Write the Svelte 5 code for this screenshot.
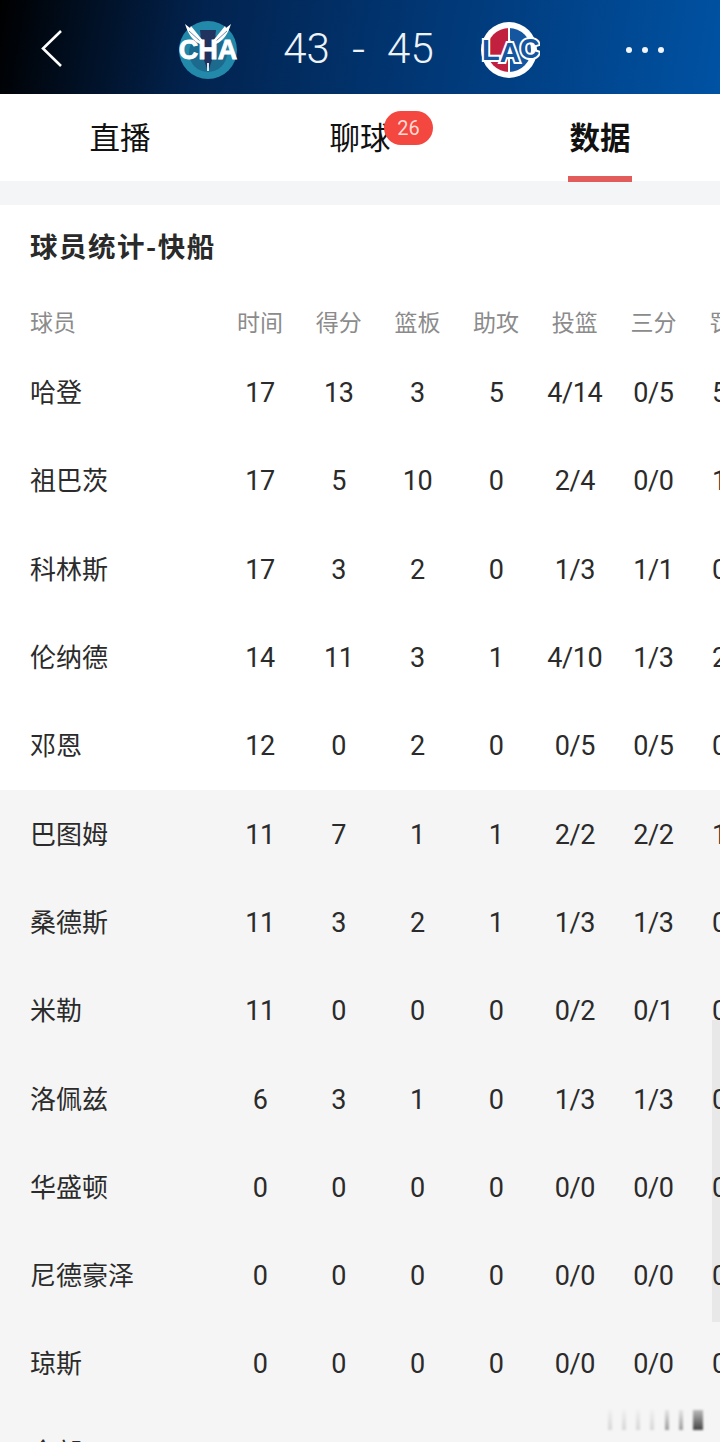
<script>
  const columns = ["时间", "得分", "篮板", "助攻", "投篮", "三分", "罚球"];
  const players = [
    ["哈登", "17", "13", "3", "5", "4/14", "0/5", "5/5"],
    ["祖巴茨", "17", "5", "10", "0", "2/4", "0/0", "1/2"],
    ["科林斯", "17", "3", "2", "0", "1/3", "1/1", "0/0"],
    ["伦纳德", "14", "11", "3", "1", "4/10", "1/3", "2/2"],
    ["邓恩", "12", "0", "2", "0", "0/5", "0/5", "0/0"],
    ["巴图姆", "11", "7", "1", "1", "2/2", "2/2", "1/1"],
    ["桑德斯", "11", "3", "2", "1", "1/3", "1/3", "0/0"],
    ["米勒", "11", "0", "0", "0", "0/2", "0/1", "0/0"],
    ["洛佩兹", "6", "3", "1", "0", "1/3", "1/3", "0/0"],
    ["华盛顿", "0", "0", "0", "0", "0/0", "0/0", "0/0"],
    ["尼德豪泽", "0", "0", "0", "0", "0/0", "0/0", "0/0"],
    ["琼斯", "0", "0", "0", "0", "0/0", "0/0", "0/0"],
    ["全部", "0", "0", "0", "0", "0/0", "0/0", "0/0"]
  ];
</script>

<div class="page">
  <header class="top">
    <svg class="back" width="24" height="40" viewBox="0 0 24 40">
      <path d="M21 2 L3 19.5 L21 37" fill="none" stroke="#fff" stroke-width="2.6" />
    </svg>
    <div class="score">
      <svg class="logo" width="62" height="62" viewBox="0 0 62 62">
        <circle cx="31" cy="31" r="29" fill="#2389ab" />
        <circle cx="31" cy="34" r="19" fill="#1c6a8e" />
        <path d="M23 11 L39 11 L36 38 L32 50 L30 50 L26 38 Z" fill="#21325e" />
        <path d="M8 5 L13 9 L14 7 L27 23 L23 25 C16 22 11 15 8 5 Z" fill="#fff" />
        <path d="M54 5 L49 9 L48 7 L35 23 L39 25 C46 22 51 15 54 5 Z" fill="#fff" />
        <path d="M12 12 L23 22 M50 12 L39 22" stroke="#6f8fb0" stroke-width="1" />
        <rect x="30" y="44" width="2" height="8" fill="#d7e6ee" />
        <text x="31" y="40" class="logo-text cha">CHA</text>
      </svg>
      <div class="nums"><span>43</span><span class="dash">-</span><span>45</span></div>
      <svg class="logo" width="62" height="62" viewBox="0 0 62 62">
        <circle cx="31" cy="31" r="28" fill="#fff" />
        <path d="M31 9 A22 22 0 0 0 31 53 Z" fill="#c2203f" />
        <path d="M31 9 A22 22 0 0 1 31 53 Z" fill="#14569f" />
        <rect x="30" y="9" width="2" height="44" fill="#fff" />
        <text class="logo-text lac" x="4" y="41"><tspan font-size="29">L</tspan><tspan font-size="28" dy="2">A</tspan><tspan font-size="27" dy="-4">C</tspan></text>
      </svg>
    </div>
    <div class="dots"><i></i><i></i><i></i></div>
  </header>

  <nav class="tabs">
    <div class="tab">直播</div>
    <div class="tab">聊球<span class="badge">26</span></div>
    <div class="tab active">数据</div>
  </nav>

  <main class="content">
    <section class="card">
      <h2>球员统计-快船</h2>
      <div class="row head">
        <div class="name">球员</div>
        {#each columns as c}<div>{c}</div>{/each}
      </div>
      {#each players as p, i}
        <div class="row" class:bench={i >= 5}>
          <div class="name">{p[0]}</div>
          {#each p.slice(1) as v}<div class="val">{v}</div>{/each}
        </div>
      {/each}
      <div class="scrollbar"></div>
      <div class="mark">
        <span></span><span></span><span></span><span></span><span></span><span></span><span></span>
      </div>
    </section>
  </main>
</div>

<style>
  :global(body) {
    margin: 0;
    background: #fff;
  }

  .page {
    width: 720px;
    height: 1447px;
    overflow: hidden;
    font-family: "Noto Sans CJK SC", "Noto Sans", sans-serif;
    color: #222;
  }

  .top {
    height: 94px;
    background: linear-gradient(100deg, #000 0%, #02234f 28%, #013b7c 65%, #0052a3 100%);
    display: flex;
    align-items: center;
    justify-content: space-between;
    padding: 4px 56px 0 40px;
    box-sizing: border-box;
  }

  .back {
    display: block;
    margin-top: -1px;
  }

  .score {
    display: flex;
    align-items: center;
    width: 363px;
    margin: 2px 0 0 26px;
    justify-content: space-between;
  }

  .logo {
    display: block;
  }

  .logo-text {
    font-family: "Liberation Sans", sans-serif;
    font-weight: 700;
    text-anchor: middle;
    fill: #fff;
  }

  .cha {
    font-size: 27px;
    stroke: #fff;
    stroke-width: 0.8px;
  }

  .lac {
    text-anchor: start;
    fill: #14569f;
    stroke: #fff;
    stroke-width: 4px;
    paint-order: stroke;
  }

  .nums {
    display: flex;
    align-items: center;
    gap: 22px;
    color: #eef3f8;
    font-family: "Roboto", sans-serif;
    font-weight: 300;
    font-size: 42px;
    line-height: 1;
    margin: -2px 0 0 1px;
  }

  .dash {
    font-size: 46px;
  }

  .dots {
    display: flex;
    gap: 10px;
    margin-top: 1px;
  }

  .dots i {
    display: block;
    width: 6px;
    height: 6px;
    border-radius: 50%;
    background: #f2f6fb;
  }

  .tabs {
    height: 87px;
    display: grid;
    grid-template-columns: repeat(3, 240px);
    background: #fff;
  }

  .tab {
    position: relative;
    display: flex;
    align-items: center;
    justify-content: center;
    font-size: 30.5px;
    color: #111;
    padding-bottom: 4px;
  }

  .tab.active {
    font-weight: 700;
  }

  .tab.active::after {
    content: "";
    position: absolute;
    left: 88px;
    bottom: -1px;
    width: 64px;
    height: 6px;
    background: #e25c5c;
  }

  .badge {
    position: absolute;
    left: 144px;
    top: 17px;
    width: 49px;
    height: 34px;
    border-radius: 17px;
    background: #f4473f;
    color: #ffd9d4;
    font-family: "Roboto", sans-serif;
    font-size: 20px;
    line-height: 34px;
    text-align: center;
  }

  .content {
    background: #f4f5f7;
    padding-top: 24px;
  }

  .card {
    position: relative;
    background: #fff;
    height: 1237px;
    overflow: hidden;
  }

  h2 {
    margin: 0;
    height: 84px;
    padding: 20px 0 0 30px;
    box-sizing: border-box;
    font-size: 27.5px;
    letter-spacing: 1.5px;
    line-height: 40px;
    font-weight: 700;
    color: #2a2a2a;
  }

  .row {
    display: grid;
    grid-template-columns: 190.7px repeat(7, 78.7px);
    padding-left: 30px;
    height: 88.3px;
    align-items: center;
    text-align: center;
    font-size: 26px;
    color: #2b2b2b;
    width: 771px;
  }

  .row.head {
    height: 60px;
    padding-top: 4px;
    box-sizing: border-box;
    font-size: 23px;
    color: #8b8b8b;
  }

  .row.bench {
    background: #f5f5f5;
  }

  .name {
    text-align: left;
    padding-bottom: 5px;
  }

  .head .name {
    padding-bottom: 0;
  }

  .val {
    position: relative;
    z-index: 1;
    font-family: "Roboto", sans-serif;
    font-size: 27px;
    letter-spacing: -0.4px;
  }

  .scrollbar {
    position: absolute;
    right: 0;
    top: 815px;
    width: 8px;
    height: 302px;
    background: #e8e8e8;
  }

  .mark {
    position: absolute;
    left: 608px;
    top: 1203px;
    width: 95px;
    height: 22px;
    display: flex;
    justify-content: space-between;
    align-items: flex-end;
    filter: blur(0.8px);
  }

  .mark span {
    display: block;
    width: 4px;
    height: 20px;
    background: linear-gradient(#f0f0f0, #d6d6d6);
  }

  .mark span:nth-child(5),
  .mark span:nth-child(6) {
    background: linear-gradient(#e4e4e4, #9c9c9c);
  }

  .mark span:last-child {
    background: linear-gradient(#bbb, #444);
    width: 10px;
  }
</style>
